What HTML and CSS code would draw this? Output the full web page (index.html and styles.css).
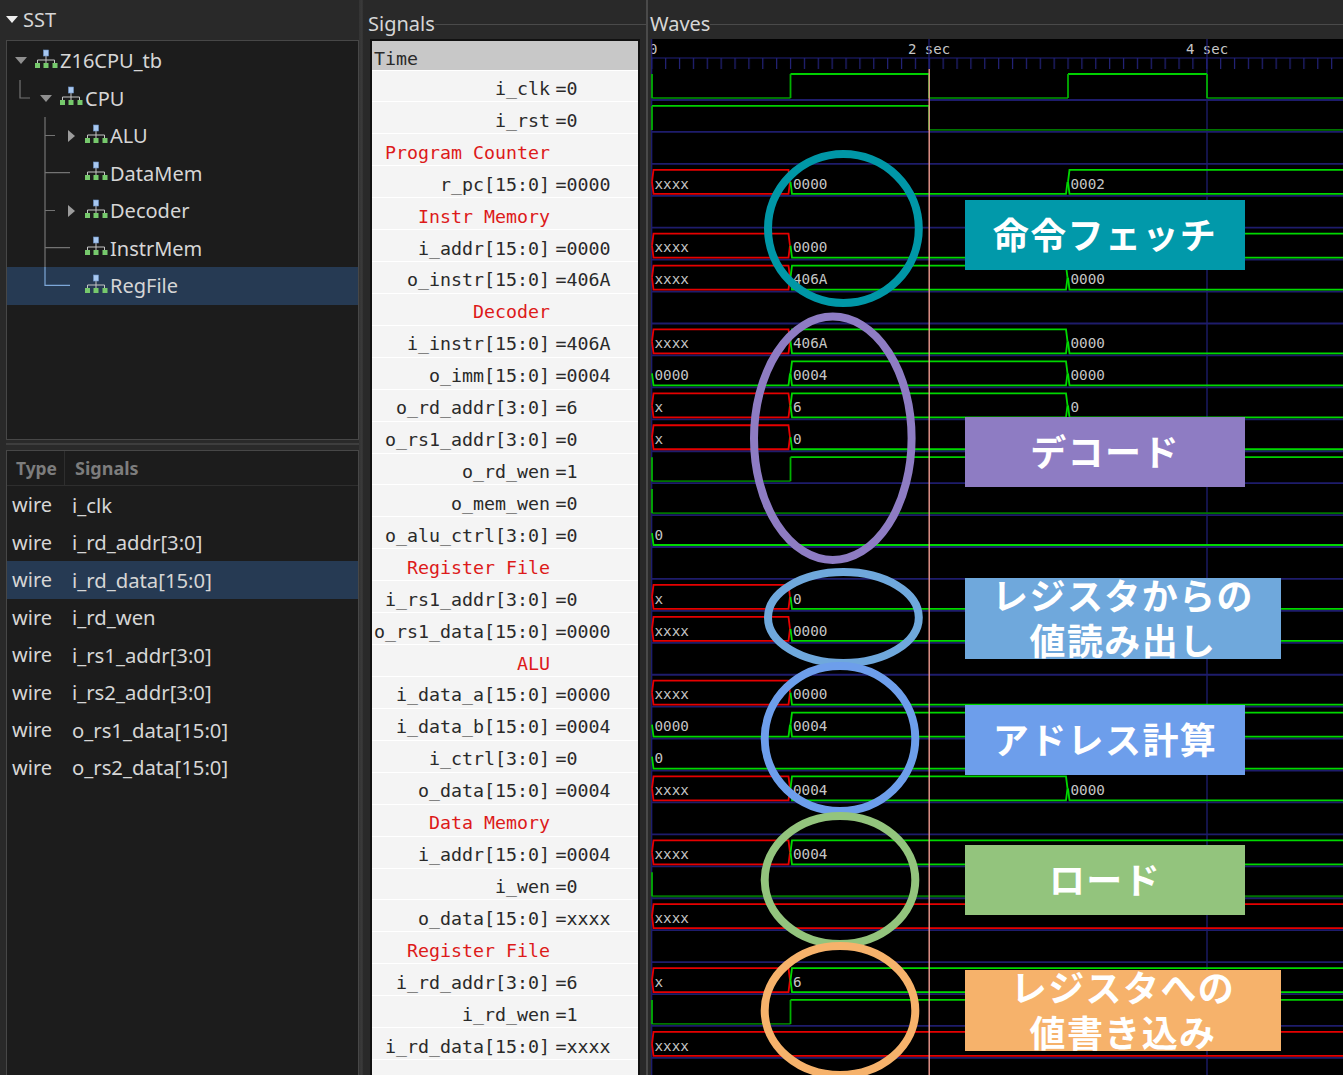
FILE: index.html
```html
<!DOCTYPE html>
<html lang="ja">
<head>
  <meta charset="UTF-8" />
  <title>GTKWave - Z16CPU_tb</title>
  <link rel="stylesheet" href="styles.css">
</head>
<body>
  <svg class="sprite" width="0" height="0">
    <symbol id="hier" viewBox="0 0 23 20">
      <path d="M11 7v4M2.5 14v-3h17v3M11 11v3" fill="none" stroke="#c4c4c4" stroke-width="1"/>
      <rect x="8.5" y="1" width="5" height="6" fill="#a8c8f0" stroke="#6f95c9" stroke-width=".6"/>
      <rect x="0" y="14" width="5" height="5" fill="#76c96c"/>
      <rect x="8.5" y="14" width="5" height="5" fill="#76c96c"/>
      <rect x="17.5" y="14" width="5" height="5" fill="#76c96c"/>
    </symbol>
  </svg>

  <div class="col-left">
    <div class="sst-title"><span class="tri-white"></span>SST</div>

    <div class="tree">
      <div class="node lvl0"><span class="tri-down"></span><svg class="hier"><use href="#hier"/></svg>Z16CPU_tb</div>
      <div class="node lvl1"><span class="tri-down"></span><svg class="hier"><use href="#hier"/></svg>CPU</div>
      <div class="node lvl2"><span class="tri-right"></span><svg class="hier"><use href="#hier"/></svg>ALU</div>
      <div class="node lvl2"><span class="tri-none"></span><svg class="hier"><use href="#hier"/></svg>DataMem</div>
      <div class="node lvl2"><span class="tri-right"></span><svg class="hier"><use href="#hier"/></svg>Decoder</div>
      <div class="node lvl2"><span class="tri-none"></span><svg class="hier"><use href="#hier"/></svg>InstrMem</div>
      <div class="node lvl2 selected"><span class="tri-none"></span><svg class="hier"><use href="#hier"/></svg>RegFile</div>
      <svg class="guides" viewBox="7 41 352 399">
        <path d="M20 80v18h10M45 117v150M45 135.5h10M45 172.7h25M45 210.5h10M45 247.7h25" fill="none" stroke="#737373" stroke-width="1.2"/>
        <path d="M45 267v18.3h25" fill="none" stroke="#7da7d8" stroke-width="1.2"/>
      </svg>
    </div>

    <div class="hsash"></div>

    <div class="siglist">
      <div class="siglist-head">
        <div class="col-type">Type</div>
        <div class="col-sig">Signals</div>
      </div>
      <div class="wire-row"><span class="wire-type">wire</span>i_clk</div>
      <div class="wire-row"><span class="wire-type">wire</span>i_rd_addr[3:0]</div>
      <div class="wire-row selected"><span class="wire-type">wire</span>i_rd_data[15:0]</div>
      <div class="wire-row"><span class="wire-type">wire</span>i_rd_wen</div>
      <div class="wire-row"><span class="wire-type">wire</span>i_rs1_addr[3:0]</div>
      <div class="wire-row"><span class="wire-type">wire</span>i_rs2_addr[3:0]</div>
      <div class="wire-row"><span class="wire-type">wire</span>o_rs1_data[15:0]</div>
      <div class="wire-row"><span class="wire-type">wire</span>o_rs2_data[15:0]</div>
    </div>
  </div>

  <div class="sash"></div>

  <div class="col-signals">
    <div class="group-head"><span class="group-title">Signals</span><span class="group-line"></span></div>
    <div class="sig-body">
      <div class="sig-time">Time</div>
      <div class="sig"><span class="sig-name">i_clk</span><span class="sig-val">=0</span></div>
      <div class="sig"><span class="sig-name">i_rst</span><span class="sig-val">=0</span></div>
      <div class="sig"><span class="sig-name comment">Program Counter</span></div>
      <div class="sig"><span class="sig-name">r_pc[15:0]</span><span class="sig-val">=0000</span></div>
      <div class="sig"><span class="sig-name comment">Instr Memory</span></div>
      <div class="sig"><span class="sig-name">i_addr[15:0]</span><span class="sig-val">=0000</span></div>
      <div class="sig"><span class="sig-name">o_instr[15:0]</span><span class="sig-val">=406A</span></div>
      <div class="sig"><span class="sig-name comment">Decoder</span></div>
      <div class="sig"><span class="sig-name">i_instr[15:0]</span><span class="sig-val">=406A</span></div>
      <div class="sig"><span class="sig-name">o_imm[15:0]</span><span class="sig-val">=0004</span></div>
      <div class="sig"><span class="sig-name">o_rd_addr[3:0]</span><span class="sig-val">=6</span></div>
      <div class="sig"><span class="sig-name">o_rs1_addr[3:0]</span><span class="sig-val">=0</span></div>
      <div class="sig"><span class="sig-name">o_rd_wen</span><span class="sig-val">=1</span></div>
      <div class="sig"><span class="sig-name">o_mem_wen</span><span class="sig-val">=0</span></div>
      <div class="sig"><span class="sig-name">o_alu_ctrl[3:0]</span><span class="sig-val">=0</span></div>
      <div class="sig"><span class="sig-name comment">Register File</span></div>
      <div class="sig"><span class="sig-name">i_rs1_addr[3:0]</span><span class="sig-val">=0</span></div>
      <div class="sig"><span class="sig-name">o_rs1_data[15:0]</span><span class="sig-val">=0000</span></div>
      <div class="sig"><span class="sig-name comment">ALU</span></div>
      <div class="sig"><span class="sig-name">i_data_a[15:0]</span><span class="sig-val">=0000</span></div>
      <div class="sig"><span class="sig-name">i_data_b[15:0]</span><span class="sig-val">=0004</span></div>
      <div class="sig"><span class="sig-name">i_ctrl[3:0]</span><span class="sig-val">=0</span></div>
      <div class="sig"><span class="sig-name">o_data[15:0]</span><span class="sig-val">=0004</span></div>
      <div class="sig"><span class="sig-name comment">Data Memory</span></div>
      <div class="sig"><span class="sig-name">i_addr[15:0]</span><span class="sig-val">=0004</span></div>
      <div class="sig"><span class="sig-name">i_wen</span><span class="sig-val">=0</span></div>
      <div class="sig"><span class="sig-name">o_data[15:0]</span><span class="sig-val">=xxxx</span></div>
      <div class="sig"><span class="sig-name comment">Register File</span></div>
      <div class="sig"><span class="sig-name">i_rd_addr[3:0]</span><span class="sig-val">=6</span></div>
      <div class="sig"><span class="sig-name">i_rd_wen</span><span class="sig-val">=1</span></div>
      <div class="sig"><span class="sig-name">i_rd_data[15:0]</span><span class="sig-val">=xxxx</span></div>
    </div>
  </div>

  <div class="sash-thin"></div>

  <div class="col-waves">
    <div class="group-head"><span class="group-title">Waves</span><span class="group-line"></span></div>
    <div class="wave-canvas">
      <svg id="waves" class="wave-svg" viewBox="651 39 692 1036">
        <defs>
          <pattern id="ticks" patternUnits="userSpaceOnUse" x="651.2" y="58" width="13.875" height="11">
            <rect width="1.2" height="11" fill="#23237a"/>
          </pattern>
        </defs>
        <text class="axis" x="649" y="54">0</text>
        <text class="axis" x="908" y="54">2 sec</text>
        <text class="axis" x="1186" y="54">4 sec</text>
        <rect x="651" y="58" width="692" height="11" fill="url(#ticks)"/>
        <path d="M651 58h692M651.7 39v1036M929 39v30M1207 39v1036" fill="none" stroke="#20207a" stroke-width="1.2"/>
        <g id="grid"></g>
        <g id="traces"></g>
        <path d="M929.2 69v1006" fill="none" stroke="#f09a90" stroke-width="1.4"/>

        <ellipse class="ring" cx="843.4" cy="228.5" rx="75.4" ry="74.5" stroke="#0097a7"/>
        <ellipse class="ring" cx="832.8" cy="438.3" rx="78.8" ry="121.7" stroke="#8e7cc3"/>
        <ellipse class="ring" cx="843.4" cy="617.5" rx="75.4" ry="45.5" stroke="#6fa8dc"/>
        <ellipse class="ring" cx="840" cy="738.5" rx="75.3" ry="72.5" stroke="#6d9eeb"/>
        <ellipse class="ring" cx="840" cy="880" rx="75.3" ry="64" stroke="#93c47d"/>
        <ellipse class="ring" cx="840" cy="1010.5" rx="75.3" ry="64.5" stroke="#f6b26b"/>
      </svg>

      <div class="callout callout-fetch">命令フェッチ</div>
      <div class="callout callout-decode">デコード</div>
      <div class="callout callout-read">レジスタからの<br>値読み出し</div>
      <div class="callout callout-addr">アドレス計算</div>
      <div class="callout callout-load">ロード</div>
      <div class="callout callout-write">レジスタへの<br>値書き込み</div>
    </div>
  </div>

  <script src="waves.js"></script>
</body>
</html>
```

FILE: styles.css
```css
html, body {
  margin: 0;
  height: 100%;
}

body {
  display: flex;
  width: 1343px;
  height: 1075px;
  overflow: hidden;
  background-color: #292929;
  color: #d6d6d6;
  font-family: "Noto Sans", sans-serif;
  font-size: 20px;
}

.sprite {
  position: absolute;
}

/* left column */
.col-left {
  display: flex;
  flex-direction: column;
  width: 359px;
  padding-left: 6px;
  box-sizing: border-box;
  flex: none;
}

.sst-title {
  display: flex;
  align-items: center;
  height: 40px;
  padding-bottom: 1px;
  box-sizing: border-box;
}

.tri-white {
  width: 0;
  height: 0;
  margin-right: 5px;
  border-left: 6.5px solid transparent;
  border-right: 6.5px solid transparent;
  border-top: 7px solid #eeeeee;
}

.tree {
  position: relative;
  height: 400px;
  box-sizing: border-box;
  padding-top: 1px;
  border: 1px solid #474747;
  background-color: #1c1c1c;
}

.node, .wire-row {
  display: flex;
  align-items: center;
  height: 37.5px;
}

.lvl0 { padding-left: 8px; }
.lvl1 { padding-left: 33px; }
.lvl2 { padding-left: 58px; }

.selected {
  background-color: #263a53;
}

.tri-down, .tri-right, .tri-none {
  flex: none;
  box-sizing: border-box;
  width: 0;
  height: 0;
  margin-right: 8px;
}

.tri-down {
  border-left: 6px solid transparent;
  border-right: 6px solid transparent;
  border-top: 7px solid #8f8f8f;
}

.tri-right {
  margin-left: 3px;
  margin-right: 10px;
  border-top: 6.5px solid transparent;
  border-bottom: 6.5px solid transparent;
  border-left: 7px solid #9c9c9c;
}

.tri-none {
  width: 12px;
  height: 1px;
}

.hier {
  flex: none;
  width: 23px;
  height: 20px;
  margin-right: 2px;
  margin-top: -4px;
}

.guides {
  position: absolute;
  left: 0;
  top: 0;
  width: 352px;
  height: 399px;
}

.hsash {
  height: 10px;
  flex: none;
  background: linear-gradient(#2a2a2a 3px, #3e3e3e 3px, #3e3e3e 5px, #2a2a2a 5px);
}

.siglist {
  flex: 1;
  border: 1px solid #474747;
  border-bottom: none;
  background-color: #1c1c1c;
}

.siglist-head {
  display: flex;
  height: 35px;
  box-sizing: border-box;
  border-bottom: 1px solid #2e2e2e;
  color: #7d7d7d;
  font-size: 18px;
  font-weight: 700;
  line-height: 34px;
}

.col-type {
  width: 58px;
  padding-left: 9px;
  box-sizing: border-box;
  border-right: 1px solid #2e2e2e;
  font-size: 17.4px;
}

.col-sig {
  padding-left: 10px;
}

.wire-row {
  font-size: 20.3px;
}

.wire-type {
  width: 65px;
  padding-left: 5px;
  box-sizing: border-box;
  font-size: 20px;
}

/* signals column */
.sash {
  width: 5px;
  flex: none;
  background: linear-gradient(90deg, #333333, #3a3a3a 60%, #242424);
}

.col-signals {
  display: flex;
  flex-direction: column;
  width: 282px;
  flex: none;
}

.group-head {
  display: flex;
  align-items: center;
  height: 39px;
  flex: none;
  padding-top: 9px;
  box-sizing: border-box;
}

.col-signals .group-head {
  padding-left: 4px;
}

.group-title {
  line-height: 30px;
}

.group-line {
  flex: 1;
  height: 1px;
  background-color: #4a4a4a;
}

.sig-body {
  flex: 1;
  margin: 2px 8px 0;
  outline: 2px solid #111111;
  background-color: #f4f4f4;
  color: #2a2a2a;
  font-family: "DejaVu Sans Mono", monospace;
  font-size: 18.3px;
}

.sig-time {
  height: 28.5px;
  padding-left: 2px;
  background-color: #c8c8c8;
  border-bottom: 1px solid #ffffff;
  line-height: 35px;
  box-sizing: content-box;
  overflow: hidden;
}

.sig {
  display: flex;
  align-items: flex-end;
  height: 31.93px;
  box-sizing: border-box;
  padding-bottom: 2.5px;
  border-bottom: 1.5px solid #ffffff;
  line-height: 21px;
}

.sig-name {
  width: 178px;
  flex: none;
  text-align: right;
  white-space: nowrap;
}

.sig-val {
  margin-left: 5.5px;
}

.comment {
  color: #dd1a1a;
}

.sash-thin {
  width: 2px;
  flex: none;
  background-color: #4a4a4a;
}

/* waves column */
.col-waves {
  display: flex;
  flex-direction: column;
  flex: 1;
  min-width: 0;
}

.col-waves .group-head {
  padding-left: 2px;
}

.wave-canvas {
  position: relative;
  flex: 1;
  margin-left: 3px;
  background-color: #000000;
}

.wave-svg {
  display: block;
  width: 692px;
  height: 1036px;
}

.axis, .val {
  fill: #c6c6c6;
  font-family: "DejaVu Sans Mono", monospace;
  font-size: 14px;
}

.val {
  font-size: 14.3px;
}

.ring {
  fill: none;
  stroke-width: 8;
}

.callout {
  position: absolute;
  display: flex;
  align-items: center;
  justify-content: center;
  width: 280px;
  height: 70px;
  padding-bottom: 4px;
  box-sizing: border-box;
  color: #ffffff;
  font-family: "Noto Sans CJK JP", "Noto Sans", sans-serif;
  font-size: 36px;
  font-weight: 700;
  letter-spacing: 1.4px;
  line-height: 45px;
  text-align: center;
}

.callout-fetch { left: 314px; top: 161px; background-color: #0199aa; }
.callout-decode { left: 314px; top: 378px; background-color: #8e7cc3; }
.callout-read { left: 314px; top: 539px; width: 316px; height: 81px; background-color: #6fa8dc; }
.callout-addr { left: 314px; top: 666px; background-color: #6d9eeb; }
.callout-load { left: 314px; top: 806px; background-color: #93c47d; }
.callout-write { left: 314px; top: 931px; width: 316px; height: 81px; background-color: #f6b26b; }
```

FILE: waves.js
```js
// Draws the trace rows of the wave view from a small table
const NS = "http://www.w3.org/2000/svg";
const PITCH = 31.93;
const A = 652, B = 790.5, C = 1068, END = 1346;

const hi = i => 74 + PITCH * i;
const lo = i => 98 + PITCH * i;

// single bit rows: [x, level] changes
const BITS = {
  0: [[A, 0], [B, 1], [929, 0], [1068, 1], [1207, 0]],
  1: [[A, 1], [929, 0]],
  12: [[A, 0], [B, 1]],
  13: [[A, 0]],
  25: [[A, 0]],
  29: [[A, 0], [B, 1]]
};

// bus rows: [x, value, hideLabel] changes
const BUSES = {
  3: [[A, "xxxx"], [B, "0000"], [C, "0002"]],
  5: [[A, "xxxx"], [B, "0000"], [C, "0002", true]], // label would sit under a callout
  6: [[A, "xxxx"], [B, "406A"], [C, "0000"]],
  8: [[A, "xxxx"], [B, "406A"], [C, "0000"]],
  9: [[A, "0000"], [B, "0004"], [C, "0000"]],
  10: [[A, "x"], [B, "6"], [C, "0"]],
  11: [[A, "x"], [B, "0"]],
  14: [[A, "0"]],
  16: [[A, "x"], [B, "0"]],
  17: [[A, "xxxx"], [B, "0000"]],
  19: [[A, "xxxx"], [B, "0000"]],
  20: [[A, "0000"], [B, "0004"]],
  21: [[A, "0"]],
  22: [[A, "xxxx"], [B, "0004"], [C, "0000"]],
  24: [[A, "xxxx"], [B, "0004"]],
  26: [[A, "xxxx"]],
  28: [[A, "x"], [B, "6"]],
  30: [[A, "xxxx"]]
};

function add(parent, tag, attrs, text) {
  const el = document.createElementNS(NS, tag);
  Object.keys(attrs).forEach(k => el.setAttribute(k, attrs[k]));
  if (text) el.textContent = text;
  parent.appendChild(el);
  return el;
}

function line(parent, d, color) {
  add(parent, "path", { d: d, fill: "none", stroke: color, "stroke-width": 1.8 });
}

const grid = document.getElementById("grid");
const traces = document.getElementById("traces");

for (let i = 0; i <= 30; i++) {
  const y = 100 + PITCH * i;
  line(grid, `M651 ${y}H1343`, "#1e1c6c");
}

Object.keys(BITS).forEach(row => {
  const changes = BITS[row];
  const top = hi(row), bottom = lo(row);
  changes.forEach((c, n) => {
    const x0 = c[0];
    const x1 = n + 1 < changes.length ? changes[n + 1][0] : END;
    const y = c[1] ? top : bottom;
    line(traces, `M${x0} ${y}H${x1}`, c[1] ? "#00d000" : "#007400");
    line(traces, `M${x0} ${top}V${bottom}`, "#00b000");
  });
});

Object.keys(BUSES).forEach(row => {
  const changes = BUSES[row];
  const top = hi(row), bottom = lo(row), mid = (top + bottom) / 2;
  changes.forEach((c, n) => {
    const x0 = c[0], value = c[1];
    const x1 = n + 1 < changes.length ? changes[n + 1][0] - 0.5 : END;
    const color = value.includes("x") ? "#e60000" : "#00d800";
    line(traces, `M${x0} ${mid}L${x0 + 1.5} ${bottom}H${x1 - 1.5}L${x1} ${mid}`, color);
    // an all zero value only has its bottom line
    if (!/^0+$/.test(value)) {
      line(traces, `M${x0} ${mid}L${x0 + 1.5} ${top}H${x1 - 1.5}L${x1} ${mid}`, color);
    }
    if (!c[2]) add(traces, "text", { class: "val", x: x0 + 2.5, y: mid + 6.8 }, value);
  });
});
```
